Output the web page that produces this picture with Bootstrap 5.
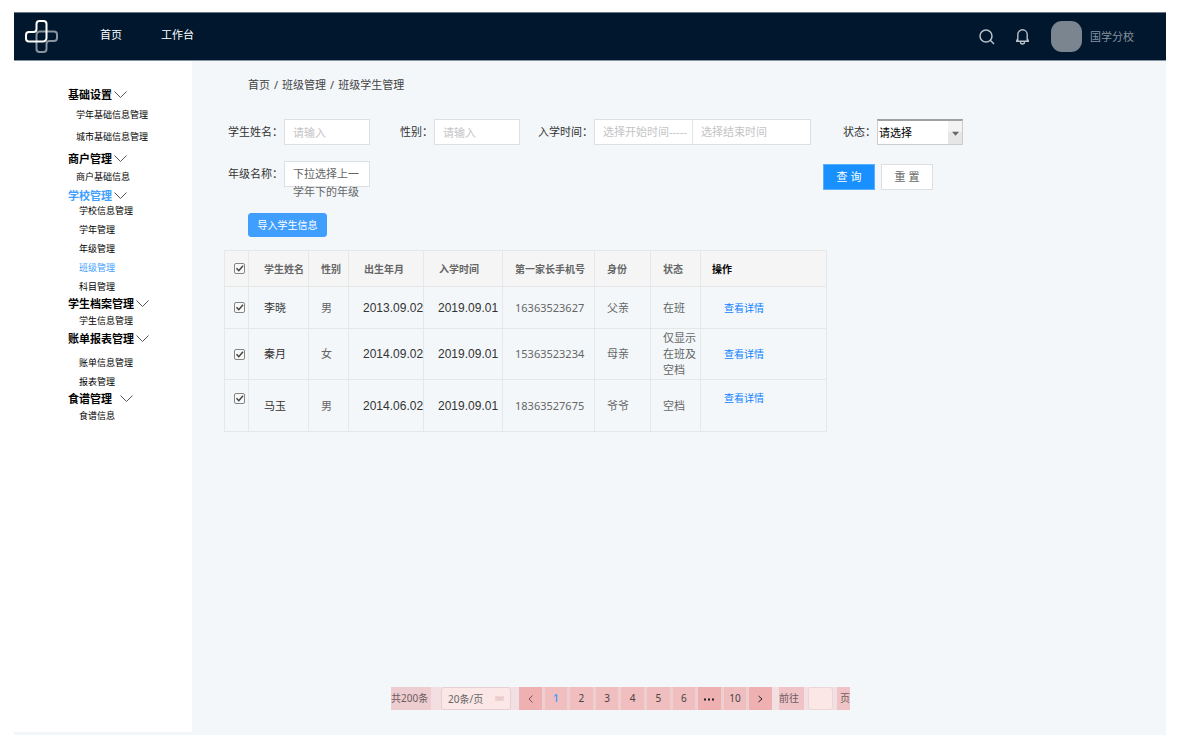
<!DOCTYPE html>
<html lang="zh-CN">
<head>
<meta charset="utf-8">
<meta name="viewport" content="width=device-width, initial-scale=1">
<title>班级学生管理</title>
<link rel="stylesheet" href="https://cdn.jsdelivr.net/npm/bootstrap@5.3.0/dist/css/bootstrap.min.css">
<style>
  body { font-family: "Noto Sans", "Noto Sans CJK SC", sans-serif; font-size: 11px; line-height: 16px; color: #333; background: #fff; }
  a { text-decoration: none; color: inherit; }
  .page { min-height: 100vh; padding: 12px 27px 16px 14px; }

  .topbar { height: 49px; background: #00172d; border-top: 1px solid #6d7885; border-bottom: 1px solid #8593a1; color: #fff; padding: 0 31px 0 11px; }
  .topbar .links { gap: 39px; margin-left: 42px; padding-bottom: 4px; }
  .topbar .tools { color: #b9c1c9; }
  .bell { margin-left: 20px; }
  .avatar { width: 31px; height: 31px; border-radius: 11px; background: #7b858f; margin: 0 8px 0 21px; }
  .campus { color: #8793a0; padding-right: 1px; }
  .icon-btn { background: none; border: 0; padding: 0; color: inherit; line-height: 0; }

  .shell { background: #f3f7fa; padding-bottom: 3px; }
  .side { width: 178px; background: #fff; padding: 29px 0 20px 54px; color: #000; }
  .side h2 { font-size: 11px; line-height: 10px; font-weight: 700; margin: 0; }
  .side h2 svg { margin-left: 2px; vertical-align: 1px; }
  .side ul { font-size: 9px; line-height: 19px; padding-left: 11px; margin: 2px 0 4px; }
  .side .outer { padding-left: 8px; line-height: 18px; margin: 4px 0 5px; }
  .side .tall { line-height: 22px; margin-bottom: 6px; }
  .side .snug { margin-top: 0; margin-bottom: 3px; }
  .side .apart { margin-top: 9px; margin-bottom: 3px; }
  .side .current { color: #409eff; }

  .content { padding: 16px 32px 22px; }
  .crumbs { margin: 0 0 26px 24px; color: #444; font-size: 11px; }
  .crumbs .breadcrumb-item + .breadcrumb-item { padding-left: 4px; }
  .crumbs .breadcrumb-item + .breadcrumb-item::before { padding-right: 4px; color: #444; }
  .filters { margin-left: 4px; }
  .filters label { padding-right: 1px; white-space: nowrap; }
  .for-sex { margin-left: 30px; }
  .for-date { margin-left: 18px; }
  .for-status { margin-left: 32px; }
  .second-row { margin-top: 13px; }
  .actions { margin: 6px 0 0 453px; gap: 6px; }
  .box { width: 86px; height: 26px; border: 1px solid #dcdfe3; border-radius: 0; background: #fff; padding: 0 8px; font-size: 11px; line-height: 24px; color: #666; }
  .box::placeholder { color: #c4c4c6; opacity: 1; }
  .range { width: 217px; border: 1px solid #dcdfe3; background: #fff; height: 26px; }
  .range input { border: 0; background: none; height: 24px; }
  .range .from { width: 97px; padding-right: 0; }
  .range .to { width: 118px; border-left: 1px solid #e2e5e8; }
  .status { appearance: none; width: 86px; height: 26px; font-size: 11px; padding: 0 16px 0 1px; border: 1px solid #ccc; border-top: 2px solid #a0a0a0; border-radius: 0; color: #000;
    background: url("data:image/svg+xml,%3Csvg xmlns='http://www.w3.org/2000/svg' width='14' height='24'%3E%3Crect width='14' height='24' fill='%23e6e6e6'/%3E%3Crect width='14' height='11' fill='%23f3f3f3'/%3E%3Cpath d='M4 11h7l-3.5 4z' fill='%23666'/%3E%3C/svg%3E") right center no-repeat #fff; }
  .grade { line-height: 18px; padding-top: 3px; white-space: nowrap; text-align: left; overflow: visible; }
  .act { width: 52px; height: 26px; border-radius: 0; padding: 0; font-size: 11px; line-height: 24px; }
  .act-main { background: #1890ff; border-color: #5ab0ff; color: #fff; }
  .act-plain { background: #fff; border-color: #dedede; color: #666; }
  .import { margin: 23px 0 13px 24px; width: 79px; height: 24px; padding: 0; font-size: 10px; line-height: 22px; border-radius: 3px; background: #409eff; border-color: #409eff; color: #fff; white-space: nowrap; }

  .roster { width: 603px; table-layout: fixed; border-color: #e6e7e9; color: #666; margin: 0; }
  .roster > :not(caption) > * > * { padding: 0 0 0 12px; vertical-align: middle; background: none; color: inherit; border: 1px solid #e6e7e9; }
  .roster > thead { background: #f5f5f5; font-size: 10px; height: 36px; }
  .roster th { font-weight: 700; white-space: nowrap; }
  .c-pick { width: 24px; } .c-name { width: 60px; } .c-sex { width: 40px; } .c-born { width: 75px; } .c-enrol { width: 79px; }
  .c-phone { width: 92px; } .c-role { width: 56px; } .c-state { width: 50px; }
  .roster > * > tr > .pick { padding-left: 9px; line-height: 0; }
  .roster > * > tr > .who { padding-left: 15px; }
  .roster > * > tr > .day { padding-left: 14px; font-family: "Liberation Sans", sans-serif; font-size: 12px; white-space: nowrap; }
  .roster > tbody > tr > .who, .roster > tbody > tr > .day { color: #333; }
  .roster > thead > tr > .ops-head { padding-left: 11px; color: #000; }
  .roster > tbody > tr > .ops { font-size: 10px; padding-left: 23px; }
  .roster .ops a { color: #1082ff; }
  .r-a { height: 42px; } .r-b { height: 51px; } .r-c { height: 52px; }
  .roster > tbody > tr > .high { vertical-align: top; padding-top: 10px; }
  .roster > tbody > tr > .pick.high { padding-top: 13px; }
  .tick { appearance: none; display: inline-block; width: 11px; height: 11px; margin: 0; border: 1px solid #858585; border-radius: 2px;
    background: url("data:image/svg+xml,%3Csvg xmlns='http://www.w3.org/2000/svg' viewBox='0 0 9 9'%3E%3Cpath d='M1.5 4.2L3.8 6.7L8 1.8' fill='none' stroke='%23444' stroke-width='1.5'/%3E%3C/svg%3E") #f8f8f8; }

  .pager { width: 459px; height: 23px; margin-left: 167px; background: #f2dfe2; font-size: 10px; color: #6d5b60; line-height: 22px; }
  .pager .total { width: 40px; background: #eecdd0; }
  .pager .jump { background: #f0c4c6; }
  .pager label.jump { width: 25px; }
  .pager .size { appearance: none; width: 70px; height: 23px; margin: 0 8px 0 10px; padding: 0 6px; border: 1px solid #e6cfd4; border-radius: 3px; font-size: 10px; color: #666;
    background: url("data:image/svg+xml,%3Csvg xmlns='http://www.w3.org/2000/svg' width='9' height='5'%3E%3Crect width='9' height='5' fill='%23f2d3d5'/%3E%3Cpath d='M1.5 1l3 3 3-3' fill='none' stroke='%23dcbcc0'/%3E%3C/svg%3E") right 6px center no-repeat #fae7e6; }
  .pages { width: 253px; gap: 3px; background: #efced0; margin: 0 7px 0 0; }
  .pages li { flex: 1 1 0; text-align: center; }
  .pages .page-link { padding: 0; border: 0; border-radius: 0; height: 23px; margin: 0; font-size: 10px; line-height: 22px; background: #f0bebf; color: #444; }
  .pages .page-link.edge { background: #efb0b2; }
  .pages .active .page-link { color: #409eff; font-weight: 600; }
  .pager .goto { width: 25px; height: 23px; border: 1px solid #ecd5d9; border-radius: 3px; background: #fae7e6; padding: 0; margin: 0 4px; font-size: 10px; text-align: center; }
</style>
</head>
<body>
<div class="page d-flex flex-column">
  <header class="topbar d-flex align-items-center">
    <a href="#" aria-label="主页"><svg class="d-block" width="33" height="33" viewBox="0 0 33 33" fill="none" stroke-width="2"><path d="M15 11.500H29a3 3 0 0 1 3 3V18a3 3 0 0 1-3 3h-4.500a3 3 0 0 0-3 3v5a3 3 0 0 1-3 3h-4a3 3 0 0 1-3-3V15a3.500 3.500 0 0 1 3.500-3.500z" stroke="#8a949f"/><path d="M18 21.500H4a3 3 0 0 1-3-3V15a3 3 0 0 1 3-3h4.500a3 3 0 0 0 3-3V4a3 3 0 0 1 3-3h4a3 3 0 0 1 3 3v14a3.500 3.500 0 0 1-3.500 3.500z" stroke="#fff"/></svg></a>
    <nav class="links d-flex"><a href="#">首页</a><a href="#">工作台</a></nav>
    <div class="tools d-flex align-items-center ms-auto">
      <button class="icon-btn" aria-label="搜索"><svg width="16" height="16" viewBox="0 0 16 16" fill="none" stroke="currentColor" stroke-width="1.500"><circle cx="7" cy="7" r="6"/><path d="M11.300 11.300L15 15"/></svg></button>
      <button class="icon-btn bell" aria-label="通知"><svg width="15" height="17" viewBox="0 0 15 17" fill="none" stroke="currentColor" stroke-width="1.400"><path d="M1 13.300h13M2.800 13V6.500a4.700 4.700 0 0 1 9.400 0V13M2.800 10.500L1.500 13M12.200 10.500L13.500 13M5.500 14a2 2 0 0 0 4 0"/></svg></button>
      <span class="avatar"></span><span class="campus">国学分校</span>
    </div>
  </header>

  <div class="shell d-flex flex-grow-1">
    <aside class="side flex-shrink-0">
      <h2>基础设置<svg width="13" height="7" viewBox="0 0 13 7" fill="none" stroke="#555"><path d="M.5.5l6 6 6-6"/></svg></h2>
      <ul class="list-unstyled outer tall"><li><a href="#">学年基础信息管理</a></li><li><a href="#">城市基础信息管理</a></li></ul>
      <h2>商户管理<svg width="13" height="7" viewBox="0 0 13 7" fill="none" stroke="#555"><path d="M.5.5l6 6 6-6"/></svg></h2>
      <ul class="list-unstyled outer"><li><a href="#">商户基础信息</a></li></ul>
      <h2><span class="current">学校管理</span><svg width="13" height="7" viewBox="0 0 13 7" fill="none" stroke="#555"><path d="M.5.5l6 6 6-6"/></svg></h2>
      <ul class="list-unstyled snug"><li><a href="#">学校信息管理</a></li><li><a href="#">学年管理</a></li><li><a href="#">年级管理</a></li><li><a href="#" class="current">班级管理</a></li><li><a href="#">科目管理</a></li></ul>
      <h2>学生档案管理<svg width="13" height="7" viewBox="0 0 13 7" fill="none" stroke="#555"><path d="M.5.5l6 6 6-6"/></svg></h2>
      <ul class="list-unstyled"><li><a href="#">学生信息管理</a></li></ul>
      <h2>账单报表管理<svg width="13" height="7" viewBox="0 0 13 7" fill="none" stroke="#555"><path d="M.5.5l6 6 6-6"/></svg></h2>
      <ul class="list-unstyled apart"><li><a href="#">账单信息管理</a></li><li><a href="#">报表管理</a></li></ul>
      <h2>食谱管理&nbsp; <svg width="13" height="7" viewBox="0 0 13 7" fill="none" stroke="#555"><path d="M.5.5l6 6 6-6"/></svg></h2>
      <ul class="list-unstyled"><li><a href="#">食谱信息</a></li></ul>
    </aside>

    <main class="content d-flex flex-column flex-grow-1">
      <ol class="breadcrumb crumbs"><li class="breadcrumb-item"><a href="#">首页</a></li><li class="breadcrumb-item"><a href="#">班级管理</a></li><li class="breadcrumb-item">班级学生管理</li></ol>

      <form class="filters">
        <div class="d-flex align-items-center">
          <label for="name">学生姓名：</label><input id="name" class="box" placeholder="请输入">
          <label for="sex" class="for-sex">性别：</label><input id="sex" class="box" placeholder="请输入">
          <label for="from" class="for-date">入学时间：</label>
          <div class="range d-flex"><input id="from" class="box from" placeholder="选择开始时间-----"><input class="box to" aria-label="结束时间" placeholder="选择结束时间"></div>
          <label for="status" class="for-status">状态：</label><select id="status" class="status"><option>请选择</option></select>
        </div>
        <div class="second-row d-flex align-items-center">
          <label for="grade">年级名称：</label><button type="button" id="grade" class="box grade d-flex align-items-start">下拉选择上一<br>学年下的年级</button>
          <div class="actions d-flex"><button type="button" class="btn act act-main">查 询</button><button type="button" class="btn act act-plain">重 置</button></div>
        </div>
      </form>

      <div><button class="btn import">导入学生信息</button></div>

      <table class="table roster">
        <colgroup><col class="c-pick"><col class="c-name"><col class="c-sex"><col class="c-born"><col class="c-enrol"><col class="c-phone"><col class="c-role"><col class="c-state"><col></colgroup>
        <thead><tr><th class="pick"><input type="checkbox" class="tick" checked aria-label="全选"></th><th class="who">学生姓名</th><th>性别</th><th class="who">出生年月</th><th class="who">入学时间</th><th>第一家长手机号</th><th>身份</th><th>状态</th><th class="ops-head">操作</th></tr></thead>
        <tbody>
          <tr class="r-a"><td class="pick"><input type="checkbox" class="tick" checked aria-label="李晓"></td><td class="who">李晓</td><td>男</td><td class="day">2013.09.02</td><td class="day">2019.09.01</td><td>16363523627</td><td>父亲</td><td>在班</td><td class="ops"><a href="#">查看详情</a></td></tr>
          <tr class="r-b"><td class="pick"><input type="checkbox" class="tick" checked aria-label="秦月"></td><td class="who">秦月</td><td>女</td><td class="day">2014.09.02</td><td class="day">2019.09.01</td><td>15363523234</td><td>母亲</td><td>仅显示在班及空档</td><td class="ops"><a href="#">查看详情</a></td></tr>
          <tr class="r-c"><td class="pick high"><input type="checkbox" class="tick" checked aria-label="马玉"></td><td class="who">马玉</td><td>男</td><td class="day">2014.06.02</td><td class="day">2019.09.01</td><td>18363527675</td><td>爷爷</td><td>空档</td><td class="ops high"><a href="#">查看详情</a></td></tr>
        </tbody>
      </table>

      <nav class="pager d-flex mt-auto" aria-label="分页">
        <span class="total">共200条</span>
        <select class="size" aria-label="每页条数"><option>20条/页</option></select>
        <ul class="pages list-unstyled d-flex">
          <li><a class="page-link edge" href="#" aria-label="上一页"><svg width="5" height="8" viewBox="0 0 5 8" fill="none" stroke="#7d5257"><path d="M4.500.5L1 4l3.500 3.500"/></svg></a></li>
          <li class="active"><a class="page-link" href="#">1</a></li><li><a class="page-link" href="#">2</a></li><li><a class="page-link" href="#">3</a></li><li><a class="page-link" href="#">4</a></li><li><a class="page-link" href="#">5</a></li><li><a class="page-link" href="#">6</a></li>
          <li><a class="page-link edge" href="#" aria-label="更多"><svg width="12" height="3" viewBox="0 0 12 3" fill="#222"><path d="M1 .5h2v2H1zM5 .5h2v2H5zM9 .5h2v2H9z"/></svg></a></li>
          <li><a class="page-link" href="#">10</a></li>
          <li><a class="page-link edge" href="#" aria-label="下一页"><svg width="5" height="8" viewBox="0 0 5 8" fill="none" stroke="#222"><path d="M.5 1L4 4 .5 7"/></svg></a></li>
        </ul>
        <label for="goto" class="jump">前往</label><input id="goto" class="goto"><span class="jump flex-grow-1 text-end">页</span>
      </nav>
    </main>
  </div>
</div>
<script src="https://cdn.jsdelivr.net/npm/bootstrap@5.3.0/dist/js/bootstrap.bundle.min.js"></script>
</body>
</html>
